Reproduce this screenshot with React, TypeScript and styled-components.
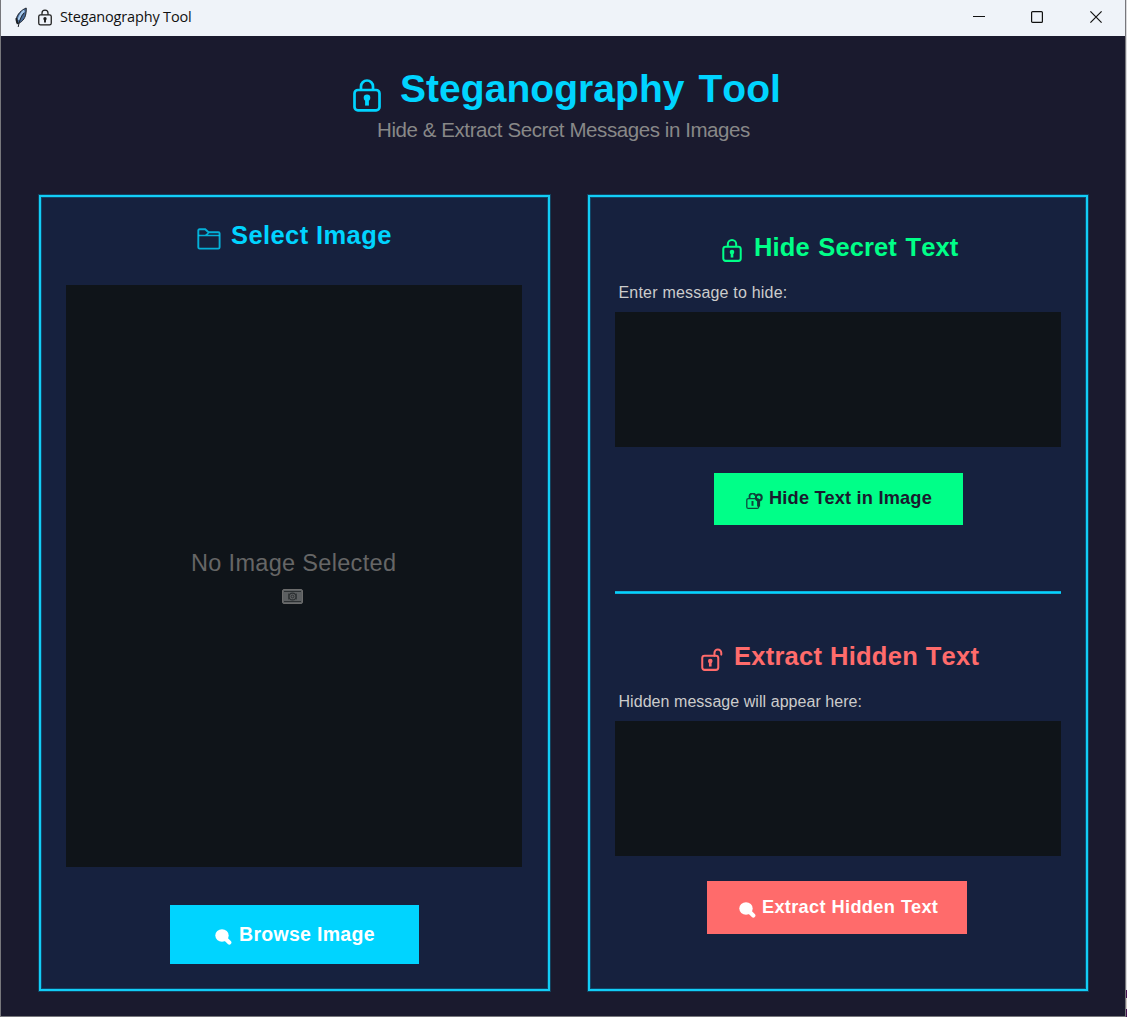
import React from "react";
import styled, { createGlobalStyle } from "styled-components";

const color = {
  bg: "#1a1a2e",
  panel: "#16213e",
  well: "#0f1419",
  cyan: "#00d4ff",
  green: "#00ff88",
  red: "#ff6b6b",
};

const GlobalStyle = createGlobalStyle`
  * { box-sizing: border-box; }
  html, body { margin: 0; padding: 0; background: ${color.bg}; }
  body { font-family: "Liberation Sans", Arial, sans-serif; font-kerning: none; overflow: hidden; }
  svg { display: block; flex: none; }
`;

const Desktop = styled.div`
  display: flex;
  width: 1127px;
  height: 1017px;
`;

const DesktopEdge = styled.div`
  width: 1px;
  background: linear-gradient(#d9d9dc 0 990px, #46104f 990px 998px, #cfc8c4 998px 1009px, #46104f 1009px);
`;

const Window = styled.div`
  width: 1126px;
  display: flex;
  flex-direction: column;
  background: ${color.bg};
  border: solid #77777c;
  border-width: 0 1px 1px 1px;
`;

const TitleBar = styled.header`
  height: 36px;
  flex: none;
  display: flex;
  align-items: center;
  padding: 0 0 2px 13px;
  background: #eff3f9;
`;

const Caption = styled.span`
  margin-left: 8px;
  flex: 1;
  font: 14.5px/20px "Open Sans", "Noto Sans", sans-serif;
  letter-spacing: -0.17px;
  color: #111;
`;

const WindowButtons = styled.div`
  display: flex;
`;

const WindowButton = styled.div`
  width: 58.5px;
  height: 34px;
  display: flex;
  align-items: center;
  justify-content: center;
`;

const Header = styled.div`
  height: 159px;
  flex: none;
  padding-top: 28px;
`;

const Row = styled.div<{ $h: number; $pad?: number; $drop?: number }>`
  height: ${(p) => p.$h}px;
  display: flex;
  align-items: center;
  padding-left: ${(p) => p.$pad ?? 0}px;
  & > svg { margin-top: ${(p) => p.$drop ?? 0}px; }
`;

const LabelRow = styled(Row)`
  padding-top: 9px;
`;

const Text = styled.span<{
  $size: number;
  $color: string;
  $bold?: boolean;
  $track?: number;
  $word?: number;
  $gap?: number;
}>`
  font-size: ${(p) => p.$size}px;
  line-height: 1.2;
  font-weight: ${(p) => (p.$bold ? 700 : 400)};
  color: ${(p) => p.$color};
  letter-spacing: ${(p) => p.$track ?? 0}px;
  word-spacing: ${(p) => p.$word ?? 0}px;
  margin-left: ${(p) => p.$gap ?? 0}px;
  white-space: nowrap;
`;

const Title = styled(Text)`
  padding-top: 2px;
`;

const Panels = styled.main`
  display: grid;
  grid-template-columns: 511px 500px;
  grid-template-rows: 796px;
  column-gap: 38px;
  padding-left: 38px;
`;

const Panel = styled.section`
  background: ${color.panel};
  border: 2px solid #12cdf6;
  box-shadow: 0 0 0 1px rgba(0, 160, 205, 0.3), inset 0 0 0 1px rgba(0, 160, 205, 0.3);
  padding: 0 25px;
`;

const ImageWell = styled.div`
  width: 456px;
  height: 582px;
  margin-top: 26px;
  background: ${color.well};
  padding-top: 263px;
`;

const TextWell = styled.textarea`
  display: block;
  width: 446px;
  height: 135px;
  border: 0;
  resize: none;
  padding: 0;
  outline: none;
  background: ${color.well};
  color: #fff;
`;

const Button = styled.button<{ $bg: string; $w: number; $h: number; $x: number; $top: number; $pad: number; $drop: number }>`
  display: flex;
  align-items: center;
  border: 0;
  font-family: inherit;
  background: ${(p) => p.$bg};
  width: ${(p) => p.$w}px;
  height: ${(p) => p.$h}px;
  margin: ${(p) => p.$top}px 0 0 ${(p) => p.$x}px;
  padding: 0 0 0 ${(p) => p.$pad}px;
  & > svg { margin-top: ${(p) => p.$drop}px; }
`;

const Divider = styled.hr`
  height: 3px;
  margin: 66px 0 0;
  border: 0;
  background: linear-gradient(#10b0da 0 1px, ${color.cyan} 1px 2px, #10b0da 2px);
`;

const Section = styled.div<{ $top: number }>`
  padding-top: ${(p) => p.$top}px;
`;

function Lock({ w, h, stroke, line, open }: { w: number; h: number; stroke: string; line: number; open?: boolean }) {
  const body = open ? 26 : 28;
  return (
    <svg width={w} height={h} viewBox={open ? "0 0 31 33" : "0 0 28 33"} fill="none" stroke={stroke} strokeWidth={line}>
      <rect x="1.5" y="11" width={body - 3} height="20.4" rx="3.4" />
      {open ? (
        <path d="M19 11V7a4.8 4.8 0 0 1 9.800 0V9.500" strokeLinecap="round" />
      ) : (
        <path d="M8 11V7.500a6 6 0 0 1 12 0V11" />
      )}
      <circle cx={body / 2} cy="18.800" r="3.300" fill={stroke} stroke="none" />
      <path d={`M${body / 2} 19V26.600`} strokeWidth="3.800" />
    </svg>
  );
}

function Feather() {
  return (
    <svg width="14" height="21" viewBox="0 0 14 21">
      <path d="M12.200 1C8 2.600 3 7 2.200 12.500c-.2 2 .7 3.400 1.300 4.200C7.500 15.500 11 12 11.800 7c.3-2 .7-4.200.4-6Z" fill="#486b99" stroke="#20242c" strokeWidth="1" />
      <path d="M10.200 3.500C7.300 6 5.600 9 4.600 13" stroke="#a9cbed" strokeWidth="2" fill="none" />
      <path d="M10 6C7 9.500 5.200 14 4.200 20" stroke="#22262d" strokeWidth="1" fill="none" />
      <path d="M2.300 11l1.400 6" stroke="#1d2025" strokeWidth="1.800" />
    </svg>
  );
}

function Folder() {
  return (
    <svg width="24" height="22" viewBox="0 0 24 22" fill="none" stroke={color.cyan} strokeWidth="1.900" strokeOpacity="0.8">
      <path d="M1.300 19V2.600Q1.300 1.300 2.600 1.300H8.200L11.500 4.200H21.300Q22.600 4.200 22.600 5.500V19.200Q22.600 20.600 21.300 20.600H2.600Q1.300 20.600 1.300 19Z" />
      <path d="M1.300 7.400H8.500L11.500 5.200M8.500 7.400H22.600" strokeWidth="1.500" />
    </svg>
  );
}

function Camera() {
  return (
    <svg width="21" height="15" viewBox="0 0 21 15">
      <rect x=".5" y=".5" width="20" height="14" rx="1.500" fill="#5c5f61" stroke="#6c6c6c" />
      <path d="M2 2.500H19M2 12.500H19" stroke="#2c3032" strokeWidth="1" />
      <path d="M6.500 4.500v6M14.500 4.500v6" stroke="#383c3e" strokeWidth="1" />
      <circle cx="10.500" cy="7.500" r="3.400" fill="#5e6062" stroke="#2c3032" strokeWidth="1.100" />
      <circle cx="10.500" cy="7.500" r="1.400" fill="none" stroke="#2c3032" strokeWidth="1" />
    </svg>
  );
}

function Magnifier() {
  return (
    <svg width="17" height="16" viewBox="0 0 17 16">
      <ellipse cx="7" cy="6.500" rx="6.700" ry="6.200" fill="#fff" />
      <path d="M10.500 9.800l3.800 3.800" stroke="#fff" strokeWidth="4.200" strokeLinecap="round" />
    </svg>
  );
}

function LockKey() {
  return (
    <svg width="17" height="17" viewBox="0 0 17 17" fill="none" stroke="#0c4a3e" strokeWidth="1.300">
      <rect x=".8" y="5.600" width="11.800" height="9.800" rx="1.500" />
      <path d="M3.600 5.600V4a2.800 2.800 0 0 1 5.800-1.200" strokeWidth="1.800" />
      <path d="M6.500 8V12.800" strokeWidth="2" />
      <circle cx="12.800" cy="4.400" r="2.900" stroke="#103c38" strokeWidth="2.100" />
      <path d="M12.600 7V13.600" stroke="#103c38" strokeWidth="3" />
    </svg>
  );
}

export default function App() {
  return (
    <Desktop>
      <GlobalStyle />
      <Window>
        <TitleBar>
          <Feather />
          <Row $h={34} $pad={10}>
            <Lock w={14} h={17} stroke="#1b1b1b" line={2.5} />
          </Row>
          <Caption>Steganography Tool</Caption>
          <WindowButtons>
            <WindowButton>
              <svg width="12" height="12"><path d="M0 5.500H12" stroke="#111" /></svg>
            </WindowButton>
            <WindowButton>
              <svg width="12" height="12"><rect x=".6" y=".6" width="10.800" height="10.800" rx="1" fill="none" stroke="#111" strokeWidth="1.200" /></svg>
            </WindowButton>
            <WindowButton>
              <svg width="12" height="12"><path d="M.4 .4L11.600 11.600M11.600 .4L.4 11.600" stroke="#111" strokeWidth="1.200" /></svg>
            </WindowButton>
          </WindowButtons>
        </TitleBar>

        <Header>
          <Row $h={49} $pad={352} $drop={14}>
            <Lock w={28} h={33} stroke={color.cyan} line={2.7} />
            <Title $size={39} $color={color.cyan} $bold $track={0.05} $word={3} $gap={19}>Steganography Tool</Title>
          </Row>
          <Row $h={34} $pad={376}>
            <Text $size={20.5} $color="#888888" $track={-0.42}>Hide &amp; Extract Secret Messages in Images</Text>
          </Row>
        </Header>

        <Panels>
          <Panel>
            <Section $top={14}>
              <Row $h={48} $pad={131} $drop={7}>
                <Folder />
                <Text $size={25.5} $color={color.cyan} $bold $track={0.4} $gap={10}>Select Image</Text>
              </Row>
            </Section>
            <ImageWell>
              <Row $h={30} $pad={125}>
                <Text $size={23.5} $color="#666666" $track={0.32}>No Image Selected</Text>
              </Row>
              <Row $h={37} $pad={216}>
                <Camera />
              </Row>
            </ImageWell>
            <Button $bg={color.cyan} $w={249} $h={59} $x={104} $top={38} $pad={45} $drop={5}>
              <Magnifier />
              <Text $size={19.5} $color="#ffffff" $bold $track={0.3} $gap={7}>Browse Image</Text>
            </Button>
          </Panel>

          <Panel>
            <Section $top={32}>
              <Row $h={36} $pad={107} $drop={7}>
                <Lock w={20} h={23} stroke={color.green} line={2.9} />
                <Text $size={25.5} $color={color.green} $bold $track={0.1} $word={1.5} $gap={12}>Hide Secret Text</Text>
              </Row>
              <LabelRow $h={47} $pad={3.5}>
                <Text $size={16} $color="#cccccc" $track={0.2}>Enter message to hide:</Text>
              </LabelRow>
              <TextWell />
            </Section>
            <Button $bg={color.green} $w={249} $h={52} $x={99} $top={26} $pad={32} $drop={4}>
              <LockKey />
              <Text $size={18.2} $color="#1a1a2e" $bold $track={0.2} $gap={6}>Hide Text in Image</Text>
            </Button>
            <Divider />
            <Section $top={44}>
              <Row $h={36} $pad={86} $drop={7}>
                <Lock w={22} h={23} stroke={color.red} line={2.9} open />
                <Text $size={25.5} $color={color.red} $bold $track={0.25} $word={0.5} $gap={11}>Extract Hidden Text</Text>
              </Row>
              <LabelRow $h={47} $pad={3.5}>
                <Text $size={16} $color="#cccccc" $track={0.05}>Hidden message will appear here:</Text>
              </LabelRow>
              <TextWell />
            </Section>
            <Button $bg={color.red} $w={260} $h={53} $x={92} $top={25} $pad={32} $drop={5}>
              <Magnifier />
              <Text $size={18.2} $color="#ffffff" $bold $track={0.3} $word={0.5} $gap={6}>Extract Hidden Text</Text>
            </Button>
          </Panel>
        </Panels>
      </Window>
      <DesktopEdge />
    </Desktop>
  );
}
